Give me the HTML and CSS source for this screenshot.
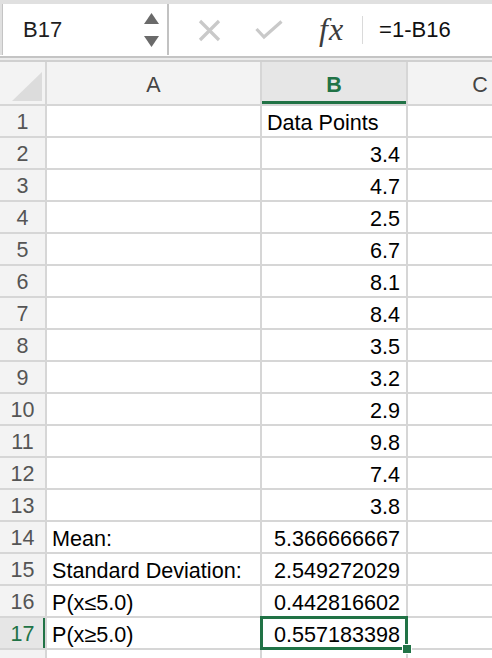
FILE: index.html
```html
<!DOCTYPE html>
<html>
<head>
<meta charset="utf-8">
<link rel="stylesheet" href="styles.css">
</head>
<body>
<div class="fbar">
  <div class="namebox">
    <span class="ref">B17</span>
    <div class="spin">
      <svg width="15" height="11" viewBox="0 0 15 11"><polygon points="7.5,0 15,11 0,11" fill="#6a6a6a"/></svg>
      <svg width="15" height="11" viewBox="0 0 15 11"><polygon points="0,0 15,0 7.5,11" fill="#6a6a6a"/></svg>
    </div>
  </div>
  <div class="formula">
    <svg class="ic-x" width="23" height="23" viewBox="0 0 23 23"><path d="M2 2 L21 21 M21 2 L2 21" stroke="#c9c9c9" stroke-width="3.2" fill="none"/></svg>
    <svg class="ic-check" width="28" height="20" viewBox="0 0 28 20"><path d="M1.5 9 L9 17 L26.5 1.5" stroke="#c9c9c9" stroke-width="3.2" fill="none"/></svg>
    <span class="fx">fx</span>
    <span class="sep"></span>
    <span class="ftext">=1-B16</span>
  </div>
</div>
<div class="gap-strip"></div>
<div class="sheet">
  <div class="corner"><svg width="30" height="29" viewBox="0 0 30 29"><polygon points="0,29 30,0 30,29" fill="#dcdcdc"/></svg></div>
  <div class="colh">A</div>
  <div class="colh sel">B</div>
  <div class="colh">C</div>

  <div class="rowh">1</div><div class="cell"></div><div class="cell">Data Points</div><div class="cell"></div>
  <div class="rowh">2</div><div class="cell"></div><div class="cell num">3.4</div><div class="cell"></div>
  <div class="rowh">3</div><div class="cell"></div><div class="cell num">4.7</div><div class="cell"></div>
  <div class="rowh">4</div><div class="cell"></div><div class="cell num">2.5</div><div class="cell"></div>
  <div class="rowh">5</div><div class="cell"></div><div class="cell num">6.7</div><div class="cell"></div>
  <div class="rowh">6</div><div class="cell"></div><div class="cell num">8.1</div><div class="cell"></div>
  <div class="rowh">7</div><div class="cell"></div><div class="cell num">8.4</div><div class="cell"></div>
  <div class="rowh">8</div><div class="cell"></div><div class="cell num">3.5</div><div class="cell"></div>
  <div class="rowh">9</div><div class="cell"></div><div class="cell num">3.2</div><div class="cell"></div>
  <div class="rowh">10</div><div class="cell"></div><div class="cell num">2.9</div><div class="cell"></div>
  <div class="rowh">11</div><div class="cell"></div><div class="cell num">9.8</div><div class="cell"></div>
  <div class="rowh">12</div><div class="cell"></div><div class="cell num">7.4</div><div class="cell"></div>
  <div class="rowh">13</div><div class="cell"></div><div class="cell num">3.8</div><div class="cell"></div>
  <div class="rowh">14</div><div class="cell">Mean:</div><div class="cell num">5.366666667</div><div class="cell"></div>
  <div class="rowh">15</div><div class="cell">Standard Deviation:</div><div class="cell num">2.549272029</div><div class="cell"></div>
  <div class="rowh">16</div><div class="cell">P(x≤5.0)</div><div class="cell num">0.442816602</div><div class="cell"></div>
  <div class="rowh active">17</div><div class="cell">P(x≥5.0)</div><div class="cell num selected">0.557183398<span class="handle"></span></div><div class="cell"></div>
  <div class="rowh"></div><div class="cell"></div><div class="cell"></div><div class="cell"></div>
</div>
</body>
</html>
```

FILE: styles.css
```css
html, body {
  margin: 0;
  padding: 0;
  width: 492px;
  height: 658px;
  overflow: hidden;
  background: #ffffff;
  font-family: "Liberation Sans", Arial, sans-serif;
}

.fbar {
  display: flex;
  height: 51px;
  padding: 4px 0 0 2px;
  background: #e0e0e0;
  border-bottom: 1px solid #ffffff;
}

.namebox {
  width: 167px;
  background: #ffffff;
  border-left: 1px solid #c4c4c4;
  border-right: 2px solid #c2c2c2;
  display: flex;
  align-items: center;
  justify-content: space-between;
  padding: 0 8px 0 20px;
  box-sizing: border-box;
}

.ref {
  font-size: 22px;
  color: #1e1e1e;
}

.spin {
  display: flex;
  flex-direction: column;
  gap: 12px;
}

.spin svg {
  display: block;
}

.formula {
  flex: 1;
  background: #ffffff;
  display: flex;
  align-items: center;
}

.ic-x {
  margin-left: 29px;
  margin-top: 2px;
}

.ic-check {
  margin-left: 34px;
  margin-top: 1px;
}

.fx {
  margin-left: 36px;
  font-family: "Liberation Serif", "DejaVu Serif", serif;
  font-style: italic;
  font-size: 32px;
  letter-spacing: 1px;
  color: #3c3c3c;
  line-height: 1;
  margin-top: -2px;
}

.sep {
  width: 1px;
  height: 28px;
  background: #dadada;
  margin-left: 18px;
}

.ftext {
  margin-left: 16px;
  font-size: 22px;
  color: #111111;
}

.gap-strip {
  height: 2px;
  background: #c4c4c4;
  border-bottom: 2px solid #ececec;
}

.sheet {
  display: grid;
  grid-template-columns: 45px 213px 144px 144px;
  grid-template-rows: 42px;
  grid-auto-rows: 30px;
  gap: 2px;
  background: #d6d6d6;
  border-top: 2px solid #d0d0d0;
  width: 492px;
  overflow: hidden;
}

.corner {
  background: #f3f3f3;
  display: flex;
  align-items: flex-end;
  justify-content: flex-end;
  padding: 0 3px 3px 0;
  box-sizing: border-box;
}

.corner svg {
  display: block;
}

.colh {
  background: #f3f3f3;
  color: #454545;
  font-size: 21.5px;
  display: flex;
  align-items: center;
  justify-content: center;
  padding-top: 4px;
  box-sizing: border-box;
}

.colh.sel {
  background: #e6e6e6;
  color: #217346;
  font-weight: bold;
  box-shadow: inset 0 -3px 0 #217346;
}

.rowh {
  background: #f3f3f3;
  color: #555555;
  font-size: 21.5px;
  display: flex;
  align-items: center;
  justify-content: center;
  padding-top: 3px;
  box-sizing: border-box;
}

.rowh.active {
  background: #e6e6e6;
  color: #217346;
  box-shadow: inset -2px 0 0 #217346;
}

.cell {
  background: #ffffff;
  color: #000000;
  font-size: 21.6px;
  display: flex;
  align-items: center;
  padding: 3px 6px 0 5px;
  box-sizing: border-box;
  white-space: nowrap;
}

.cell.num {
  justify-content: flex-end;
}

.cell.selected {
  position: relative;
  outline: 3px solid #217346;
  outline-offset: -1px;
}

.handle {
  position: absolute;
  right: -6px;
  bottom: -6px;
  width: 8px;
  height: 8px;
  background: #217346;
  border: 1px solid #ffffff;
}
```
